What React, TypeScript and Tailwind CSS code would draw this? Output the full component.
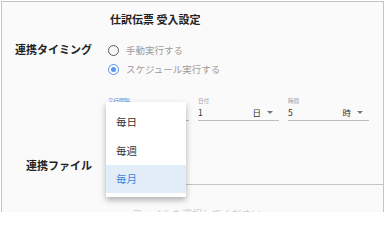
const FONT = { fontFamily: '"Noto Sans CJK JP", "Noto Sans", sans-serif' };

function Radio({ checked, label }: { checked?: boolean; label: string }) {
  return (
    <div className="flex h-[19px] items-center gap-[7px]">
      <span
        className={
          "flex size-[11px] items-center justify-center rounded-full border-[1.5px] " +
          (checked ? "border-[#5b95ee]" : "border-[#5a5a5a]")
        }
      >
        {checked && <span className="size-[5px] rounded-full bg-[#5b95ee]" />}
      </span>
      <span className="text-[9.5px] leading-none text-[#9a9a9a]">{label}</span>
    </div>
  );
}

function Select({ label, value, unit, active }: { label: string; value: string; unit: string; active?: boolean }) {
  return (
    <div className="w-[81px]">
      <div className={"h-[10px] text-[5.5px] leading-[10px] " + (active ? "text-[#3d86dd]" : "text-[#9a9a9a]")}>{label}</div>
      <div className="flex h-[15px] items-center border-b border-[#bdbdbd] pb-[1px] text-[8.5px] text-[#333]">
        <span className="flex-1">{value}</span>
        <span>{unit}</span>
        <span className="ml-[6px] mr-[6px] h-0 w-0 border-x-[3px] border-t-[3px] border-x-transparent border-t-[#777]" />
      </div>
    </div>
  );
}

export default function App() {
  return (
    <div className="h-[212px] w-[385px] overflow-hidden bg-white pl-[1px] pt-[1px]" style={FONT}>
      <div className="relative h-[230px] w-[383px] border border-[#c4c4c4] bg-[#fafafa]">
        <div className="grid grid-cols-[90px_1fr] gap-x-[16px]">
          <div />
          <div className="pl-[2px] pt-[10px] text-[11px] font-bold leading-[14px] text-[#222]">仕訳伝票 受入設定</div>

          <div className="pt-[16px] text-right text-[11px] font-bold leading-[14px] text-[#222]">連携タイミング</div>
          <div className="pt-[15px]">
            <Radio label="手動実行する" />
            <Radio checked label="スケジュール実行する" />
          </div>

          <div />
          <div className="flex gap-[9px] pt-[17px]">
            {/* 実行間隔の値はメニューの下に隠れる */}
            <Select label="実行間隔" value="" unit="" active />
            <Select label="日付" value="1" unit="日" />
            <Select label="時間" value="5" unit="時" />
          </div>

          <div className="pt-[37px] text-right text-[11px] font-bold leading-[14px] text-[#222]">連携ファイル</div>
          <div className="h-[64px] border-b border-[#c4c4c4]" />

          <div />
          <div className="pl-[24px] pt-[22px] text-[10px] leading-[14px] text-[#cfcfcf]">ファイルを選択してください</div>
        </div>

        <div className="absolute left-[104px] top-[100px] w-[80px] bg-white pb-[4px] pt-[6px] shadow-[0_3px_6px_rgba(0,0,0,0.3)]">
          <div className="flex h-[28px] items-center pl-[10px] text-[10.5px] text-[#333]">毎日</div>
          <div className="flex h-[29px] items-center pl-[10px] text-[10.5px] text-[#333]">毎週</div>
          <div className="flex h-[28px] items-center bg-[#e3edf8] pl-[10px] text-[10.5px] text-[#3d86dd]">毎月</div>
        </div>
      </div>
    </div>
  );
}
